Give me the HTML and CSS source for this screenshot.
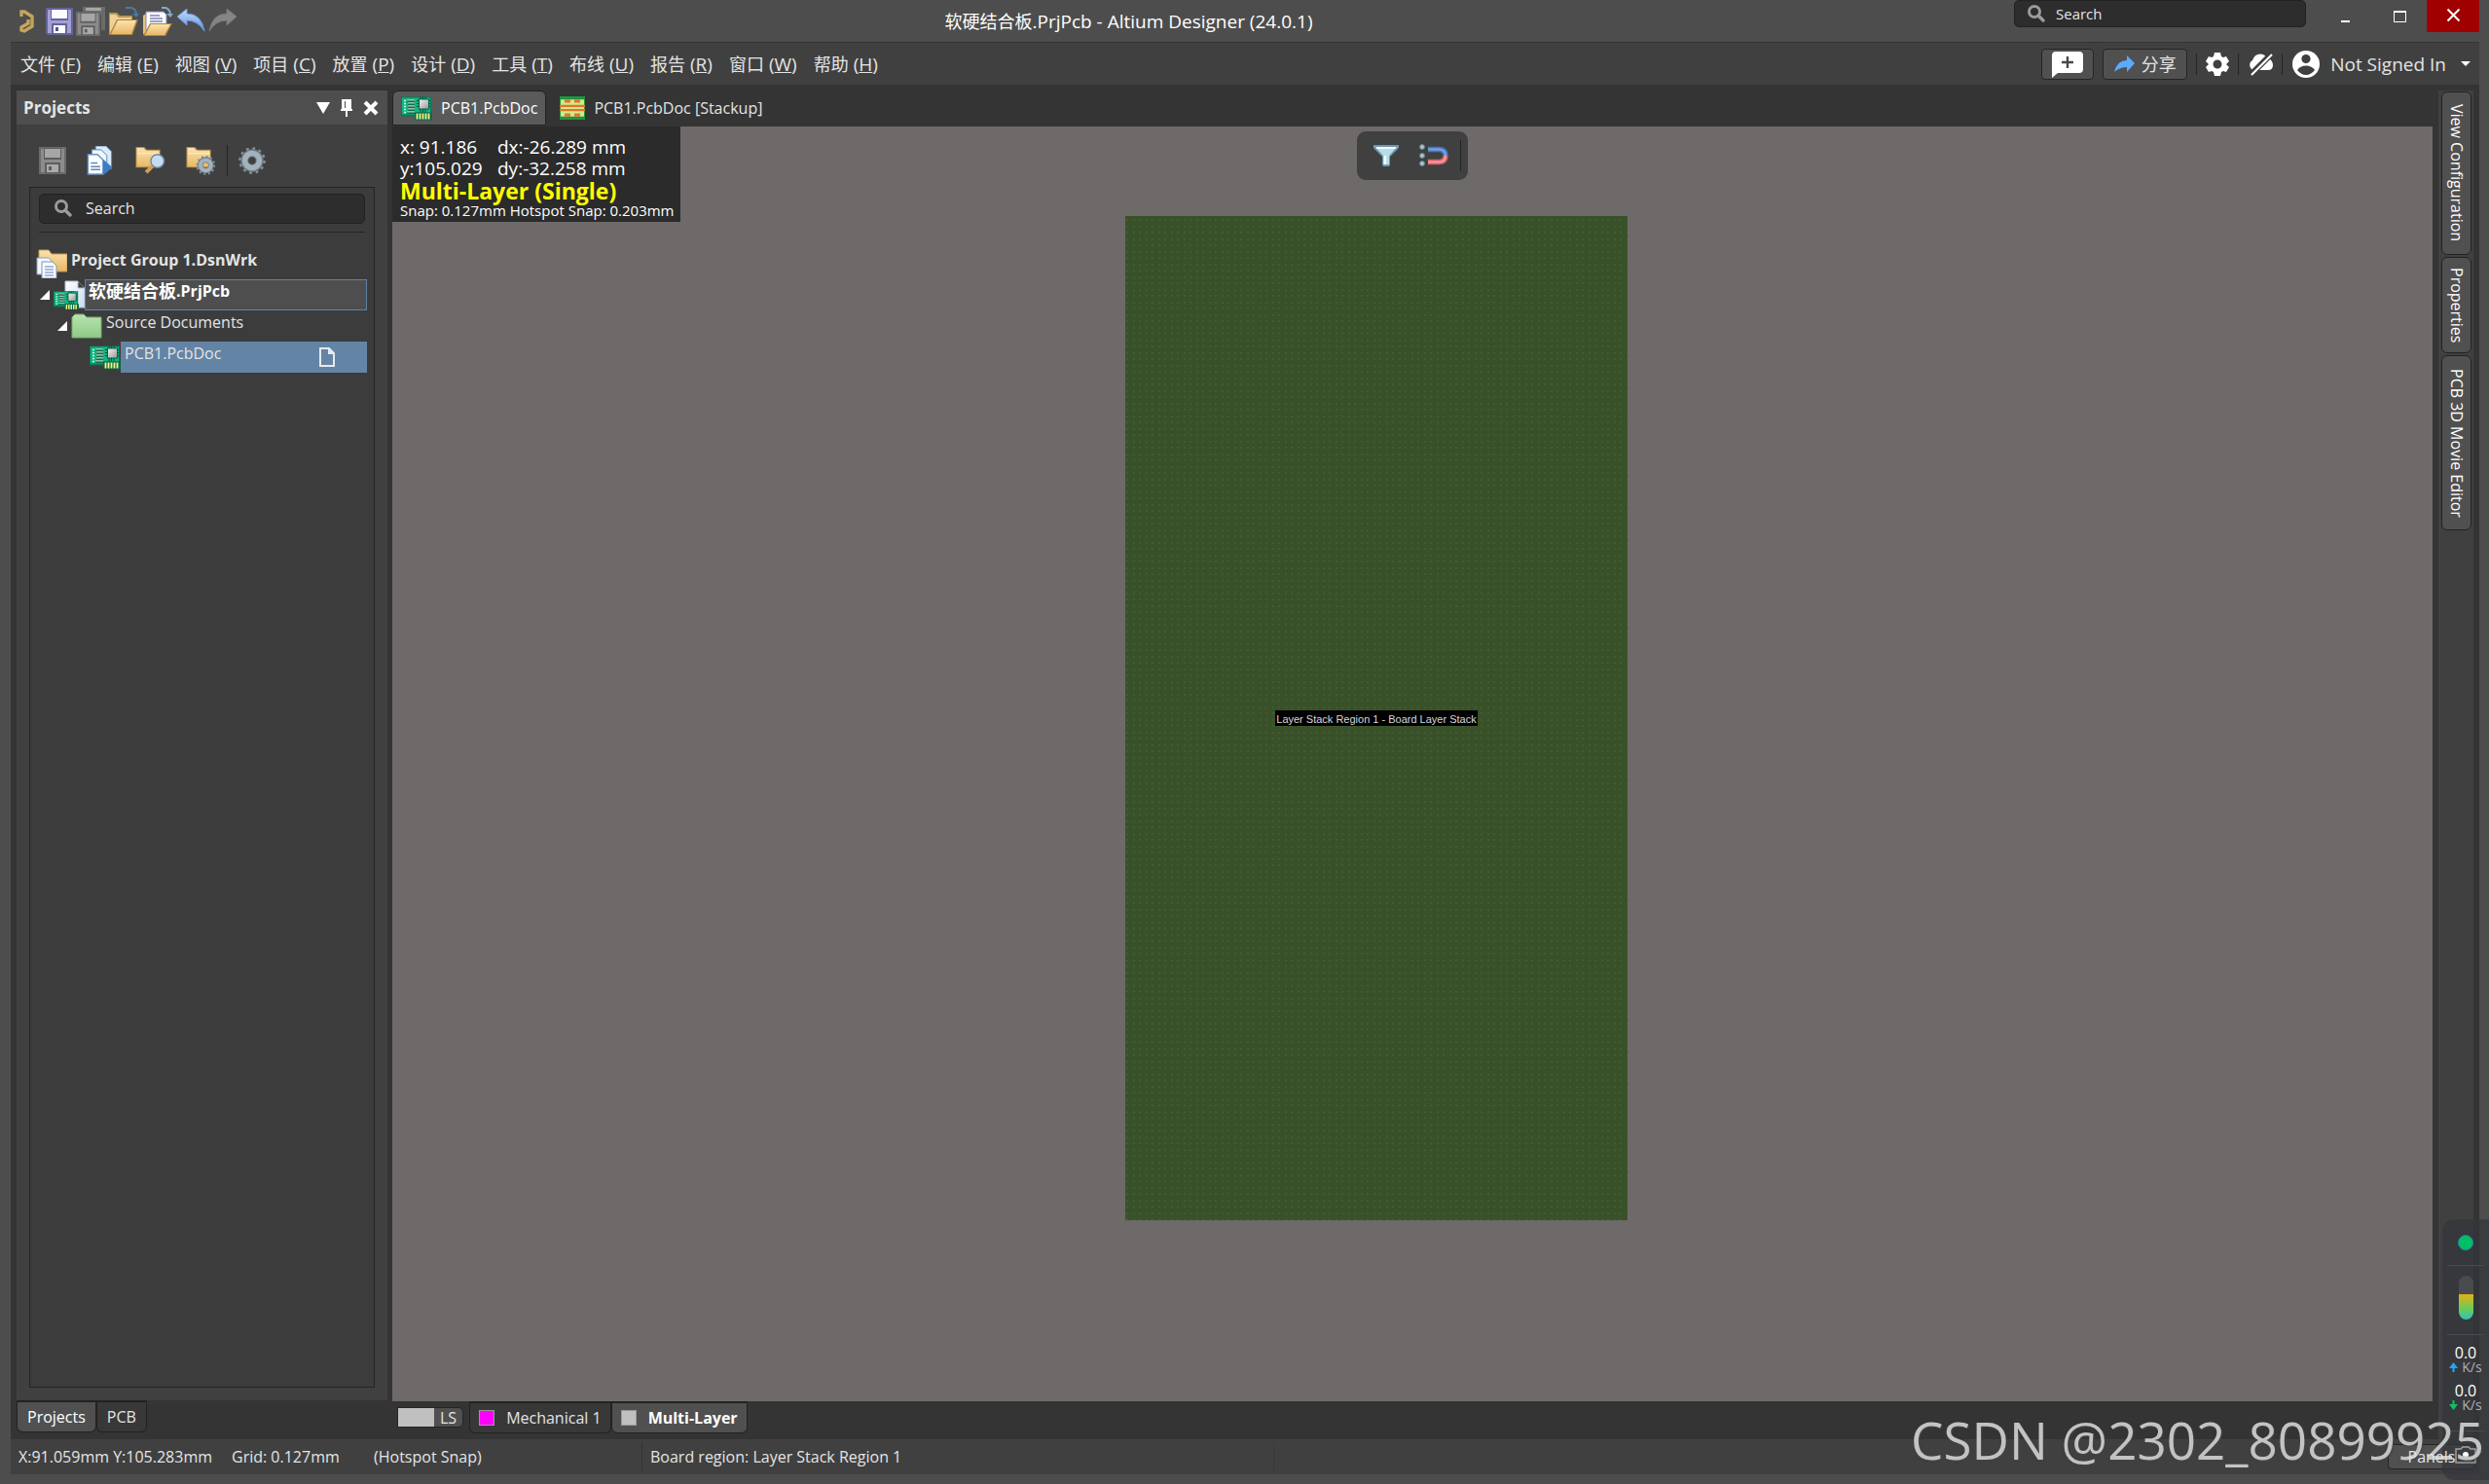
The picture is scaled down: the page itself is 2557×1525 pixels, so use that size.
FILE: index.html
```html
<!DOCTYPE html>
<html lang="zh-CN">
<head>
<meta charset="utf-8">
<title>软硬结合板.PrjPcb - Altium Designer (24.0.1)</title>
<link rel="stylesheet" href="styles.css">
</head>
<body>
<svg class="defs" aria-hidden="true">
  <defs>
    <linearGradient id="gold" x1="0" y1="0" x2="0" y2="1"><stop offset="0" stop-color="#fbe3ad"/><stop offset="1" stop-color="#e9b766"/></linearGradient>
    <linearGradient id="blue" x1="0" y1="0" x2="0" y2="1"><stop offset="0" stop-color="#c4dcfa"/><stop offset="1" stop-color="#5f8fdc"/></linearGradient>
    <linearGradient id="leaf" x1="0" y1="0" x2="0" y2="1"><stop offset="0" stop-color="#b9e3b0"/><stop offset="1" stop-color="#8fca85"/></linearGradient>
    <linearGradient id="paper" x1="0" y1="0" x2="1" y2="1"><stop offset="0" stop-color="#fff"/><stop offset="1" stop-color="#c9dcf0"/></linearGradient>
    <linearGradient id="chipface" x1="0" y1="0" x2="1" y2="1"><stop offset="0" stop-color="#f0f0f0"/><stop offset="1" stop-color="#9c9c9c"/></linearGradient>
    <symbol id="search" viewBox="0 0 18 18"><circle cx="7" cy="7" r="5.5" fill="none" stroke="#9b9b9b" stroke-width="3"/><path d="M11 11l5 5" stroke="#9b9b9b" stroke-width="3.4" stroke-linecap="round"/></symbol>
    <symbol id="floppy" viewBox="0 0 28 28"><path d="M0 0H28V28H2L0 26Z" fill="#646496"/><path d="M2 2H26V26H2Z" fill="#a3a0d8"/><path d="M5 1H23V13H5Z" fill="#646496"/><path d="M6 2H22V11H6Z" fill="#fbfbfe"/><path d="M6 16H22V27H6Z" fill="#646496"/><path d="M8 18H20V26H8Z" fill="#fff"/><path d="M10 20H13V24H10Z" fill="#55558a"/></symbol>
    <symbol id="floppy-off" viewBox="0 0 28 28"><path d="M0 0H28V28H0Z" fill="#6b6b6b"/><path d="M2 2H26V26H2Z" fill="#8c8c8c"/><path d="M5 1H23V13H5Z" fill="#5d5d5d"/><path d="M6 2H22V11H6Z" fill="#a6a6a6"/><path d="M6 16H22V27H6Z" fill="#5d5d5d"/><path d="M8 18H20V26H8Z" fill="#aaa"/><path d="M10 20H13V24H10Z" fill="#5d5d5d"/></symbol>
    <symbol id="board" viewBox="0 0 32 25"><path d="M0 1H31V17H28V21H0Z" fill="#067a55"/><path d="M1 2H30V17H14V19H1Z" fill="#10b583"/><path d="M3 5h2M3 8h2M3 11h2M3 14h2M3 17h2" stroke="#d9f5e8" stroke-width="1.6"/><path d="M6 5H14M7 8H14M7 11H14M7 14H14M6 17H14" stroke="#075c3e" stroke-width="2.4"/><path d="M6 4.400H14M7 7.400H14M7 10.400H14M7 13.400H14M6 16.400H14" stroke="#e2f7e9" stroke-width="1"/><path d="M20 1V17M22.500 1V17M25 1V17M16 5H30M16 8H30M16 11H30" stroke="#044c35" stroke-width="1"/><path d="M18 3H29V14H18Z" fill="#075f43"/><path d="M19 4H28V13H19Z" fill="url(#chipface)"/><path d="M14 17H32V25H14Z" fill="#076b48"/><path d="M16.500 18V24M19.500 18V24M22.500 18V24M25.500 18V24M28.500 18V24" stroke="#f5f58a" stroke-width="1.800"/></symbol>
    <symbol id="cog" viewBox="0 0 28 28"><circle cx="14" cy="14" r="12.300" fill="none" stroke="#84939c" stroke-width="3" stroke-dasharray="2.700 3.740"/><circle cx="14" cy="14" r="7.700" fill="none" stroke="#6b7b86" stroke-width="8"/><circle cx="14" cy="14" r="7.500" fill="none" stroke="#a4b2bc" stroke-width="5.500"/></symbol>
    <symbol id="folder" viewBox="0 0 30 26"><path d="M1 23V1H10L13 4H27V23Z" fill="#b08c4d"/><path d="M2 22V2H9L12 5H26V22Z" fill="url(#gold)"/><path d="M3 8H26" stroke="#fff0c8"/></symbol>
    <symbol id="twisty" viewBox="0 0 10 10"><path d="M10 0V10H0Z" fill="#fff"/></symbol>
  </defs>
</svg>

<header class="titlebar">
  <div class="quick">
    <svg class="logo" viewBox="0 0 17 26"><path d="M3 8V3H6L14 8V18L6 23L3 22V19L10 15V11" fill="none" stroke="#c6a45b" stroke-width="3.400"/></svg>
    <button class="tool" aria-label="Save"><svg class="i28"><use href="#floppy"/></svg></button>
    <button class="tool" aria-label="Save all"><svg class="i30" viewBox="0 0 30 30"><path d="M7 0H30V24H26V8H7Z" fill="#6b6b6b"/><path d="M10 1H26V4H10Z" fill="#a6a6a6"/><use href="#floppy-off" x="0" y="5" width="25" height="25"/></svg></button>
    <button class="tool" aria-label="Open"><svg class="i32" viewBox="0 0 32 30"><path d="M1 28V6H9L12 9H25V28Z" fill="#b89656"/><path d="M2 27V8H8L11 11H24V27Z" fill="#f0d194"/><path d="M1 29L9 13H31L25 29Z" fill="#a88345"/><path d="M3 28L10 14H29L24 28Z" fill="url(#gold)"/><path d="M18 1H23Q28 1 29 7" fill="none" stroke="#477ba5" stroke-width="2"/><path d="M25 7H32L29 11Z" fill="#477ba5"/></svg></button>
    <button class="tool" aria-label="Open project"><svg class="i32" viewBox="0 0 32 30"><path d="M1 28V9L4 7V28Z" fill="#e8c079"/><path d="M4 5H22L25 8V24H4Z" fill="#fdfdff" stroke="#8187b5"/><path d="M8 9H18M8 12H21M8 15H21" stroke="#7d82ae" stroke-width="1.500"/><path d="M1 30L8 17H31L24 30Z" fill="#b08342"/><path d="M3 29L9 18H29L23 29Z" fill="url(#gold)"/><path d="M20 1H24Q28 2 29 7" fill="none" stroke="#7fa9c9" stroke-width="2"/><path d="M25 7H32L29 11Z" fill="#7fa9c9"/></svg></button>
    <button class="tool" aria-label="Undo"><svg class="i30" viewBox="0 0 30 30"><path d="M1 10L11 2V7Q26 7 29 25Q22 14 11 14V19Z" fill="url(#blue)" stroke="#6d97de"/></svg></button>
    <button class="tool" aria-label="Redo"><svg class="i30" viewBox="0 0 30 30"><path d="M29 10L19 2V7Q4 7 1 25Q8 14 19 14V19Z" fill="#858585" stroke="#767676"/></svg></button>
  </div>
  <h1 class="title"><span class="han">软硬结合板</span>.PrjPcb - Altium Designer (24.0.1)</h1>
  <div class="window-side">
    <label class="field global-search"><svg class="i18"><use href="#search"/></svg><input type="text" placeholder="Search" aria-label="Search"></label>
    <button class="win" aria-label="Minimize"><svg viewBox="0 0 54 33"><path d="M20 22H29" stroke="#fff" stroke-width="2"/></svg></button>
    <button class="win" aria-label="Maximize"><svg viewBox="0 0 54 33"><path d="M20.500 12H32.500V22.500H20.500Z" fill="none" stroke="#fff"/><path d="M20 12H33" stroke="#fff" stroke-width="2"/></svg></button>
    <button class="win close" aria-label="Close"><svg viewBox="0 0 54 33"><path d="M21.500 9.500L33.500 21.500M33.500 9.500L21.500 21.500" stroke="#fff" stroke-width="2"/></svg></button>
  </div>
</header>

<div class="frame">
  <nav class="menubar">
    <div class="menus">
      <button class="menu">文件 <span>(<u>F</u>)</span></button>
      <button class="menu">编辑 <span>(<u>E</u>)</span></button>
      <button class="menu">视图 <span>(<u>V</u>)</span></button>
      <button class="menu">项目 <span>(<u>C</u>)</span></button>
      <button class="menu">放置 <span>(<u>P</u>)</span></button>
      <button class="menu">设计 <span>(<u>D</u>)</span></button>
      <button class="menu">工具 <span>(<u>T</u>)</span></button>
      <button class="menu">布线 <span>(<u>U</u>)</span></button>
      <button class="menu">报告 <span>(<u>R</u>)</span></button>
      <button class="menu">窗口 <span>(<u>W</u>)</span></button>
      <button class="menu">帮助 <span>(<u>H</u>)</span></button>
    </div>
    <div class="account">
      <button class="boxed note" aria-label="Comment"><svg class="i32" viewBox="0 0 32 28"><path d="M4 1H28Q32 1 32 5V19Q32 23 28 23H6L0 28V5Q0 1 4 1Z" fill="#fff"/><path d="M16 6V18M10 12H22" stroke="#4a4a4a" stroke-width="2.400"/></svg></button>
      <button class="boxed share"><svg class="i22" viewBox="0 0 22 18"><path d="M21 8L13 0V5Q3 5 0 17Q6 12 13 12V17Z" fill="#5aabff"/></svg><span class="han">分享</span></button>
      <button class="icon-btn" aria-label="Settings"><svg class="i24" viewBox="0 0 24 24"><path fill="#fff" fill-rule="evenodd" d="M9 0H15L16 4L18 5L21 4L24 9L21 12L24 15L21 20L18 19L16 20L15 24H9L8 20L6 19L3 20L0 15L3 12L0 9L3 4L6 5L8 4ZM12 7.500A4.500 4.500 0 1 0 12 16.500A4.500 4.500 0 1 0 12 7.500Z"/></svg></button>
      <button class="icon-btn" aria-label="Cloud offline"><svg class="i26" viewBox="0 0 26 24"><path d="M6 18A5.500 5.500 0 0 1 5 8Q8 0 16 2L22 6Q26 9 26 13Q26 18 21 18Z" fill="#fff"/><path d="M4 22L24 2" stroke="#3f3f3f" stroke-width="6"/><path d="M4 23L25 2" stroke="#fff" stroke-width="2.200"/></svg></button>
      <button class="icon-btn user"><svg class="i28" viewBox="0 0 28 28"><circle cx="14" cy="14" r="14" fill="#fff"/><circle cx="14" cy="8.500" r="4.600" fill="#3f3f3f"/><path d="M5 20Q8 15.500 14 15.500Q20 15.500 23 20Q19 25 14 25Q9 25 5 20Z" fill="#3f3f3f"/></svg><span>Not Signed In</span><svg class="caret" viewBox="0 0 10 5"><path d="M0 0H10L5 5Z" fill="#fff"/></svg></button>
    </div>
  </nav>

  <main class="workspace">
    <aside class="side">
      <section class="panel">
        <header class="panel-head">
          <h2>Projects</h2>
          <button class="glyph" aria-label="Menu"><svg class="i14" viewBox="0 0 14 12"><path d="M0 0H14L7 12Z" fill="#fff"/></svg></button>
          <button class="glyph" aria-label="Pin"><svg class="i12" viewBox="0 0 12 18"><path d="M1 0H11V10H12V12H7V18H5V12H0V10H1ZM4 2V9H5V2Z" fill="#fff" fill-rule="evenodd"/></svg></button>
          <button class="glyph" aria-label="Close panel"><svg class="i16" viewBox="0 0 16 16"><path d="M2 2L14 14M14 2L2 14" stroke="#fff" stroke-width="4"/></svg></button>
        </header>
        <div class="panel-tools">
          <button class="tool" aria-label="Save"><svg class="i28"><use href="#floppy-off"/></svg></button>
          <button class="tool" aria-label="Compile"><svg class="i30" viewBox="0 0 28 31"><path d="M9 0H20L26 6V24H9Z" fill="#dbeafa" stroke="#5d86b5"/><path d="M5 4H15L21 10V27H5Z" fill="#eef6ff" stroke="#5d86b5"/><path d="M1 9H11L17 15V30H1Z" fill="#fff" stroke="#6d93bf" stroke-width="1.500"/><path d="M4 18H11M4 22H14M4 25H14" stroke="#5d86b5" stroke-width="1.500"/><path d="M17 14L27 23L17 31Z" fill="#3e7cc9"/></svg></button>
          <button class="tool" aria-label="Explore"><svg class="i32" viewBox="0 0 32 31"><use href="#folder" width="30" height="26"/><path d="M19 21L12 28" stroke="#cf9f50" stroke-width="4"/><circle cx="24" cy="16" r="7" fill="#c8dcf1" stroke="#708ca6" stroke-width="1.500"/></svg></button>
          <button class="tool" aria-label="Project options"><svg class="i32" viewBox="0 0 32 31"><use href="#folder" width="30" height="26"/><use href="#cog" x="11" y="10" width="21" height="21"/></svg></button>
          <span class="rule"></span>
          <button class="tool" aria-label="Settings"><svg class="i28"><use href="#cog"/></svg></button>
        </div>
        <div class="panel-body">
          <label class="field"><svg class="i18"><use href="#search"/></svg><input type="text" placeholder="Search" aria-label="Search projects"></label>
          <ul class="tree">
            <li class="node level0"><svg class="i32" viewBox="0 0 32 30"><path d="M3 20V1H13L16 5H32V23H3Z" fill="url(#gold)" stroke="#c29b5c"/><path d="M1 9H13L16 12V26H1Z" fill="#f3f8ff" stroke="#8aa0c4"/><path d="M6 13H17L21 17V30H6Z" fill="#f8fbff" stroke="#7d93bb"/><path d="M9 18H18M9 21H18M9 24H18M9 27H18" stroke="#5d80b5"/></svg><span class="name strong">Project Group 1.DsnWrk</span></li>
            <li class="node level1"><svg class="twisty"><use href="#twisty"/></svg><svg class="i32" viewBox="0 0 32 30"><path d="M12 1H25L32 8V28H12Z" fill="url(#paper)" stroke="#b9bfd2"/><path d="M25 1V8H32" fill="#3c3c3c" stroke="#b9bfd2"/><use href="#board" x="0" y="10" width="26" height="21"/></svg><span class="name strong current"><span class="han">软硬结合板</span>.PrjPcb</span></li>
            <li class="node level2"><svg class="twisty"><use href="#twisty"/></svg><svg class="i32" viewBox="0 0 32 30"><path d="M1 27V6L4 3H13L16 6H31V27Z" fill="url(#leaf)" stroke="#79ab70"/></svg><span class="name">Source Documents</span></li>
            <li class="node level3"><svg class="i32"><use href="#board"/></svg><span class="name selected">PCB1.PcbDoc<svg class="doc" viewBox="0 0 16 20"><path d="M1 1H10L15 6V19H1Z" fill="none" stroke="#e6eaf0" stroke-width="2"/><path d="M9 0V7H16Z" fill="#e6eaf0"/></svg></span></li>
          </ul>
        </div>
      </section>
      <div class="side-tabs">
        <button class="btab on">Projects</button>
        <button class="btab">PCB</button>
      </div>
    </aside>

    <section class="editor">
      <div class="doc-tabs">
        <button class="dtab on"><svg class="i32"><use href="#board"/></svg>PCB1.PcbDoc</button>
        <button class="dtab"><svg class="i26" viewBox="0 0 26 22" preserveAspectRatio="none"><path d="M0 0H26V22H0Z" fill="#20943f"/><path d="M1 3H25V19H1Z" fill="#d3e88c"/><path d="M5 3h6v3H5zM15 3h6v3h-6zM5 16h6v3H5zM15 16h6v3h-6zM0 8h26v2H0zM0 12h26v2H0z" fill="#e0762a"/></svg>PCB1.PcbDoc [Stackup]</button>
      </div>
      <div class="canvas">
        <div class="pcb"><span class="region">Layer Stack Region 1 - Board Layer Stack</span></div>
        <div class="hud">
          <div class="coords"><span>x: 91.186</span><span>dx:-26.289 mm</span><span>y:105.029</span><span>dy:-32.258 mm</span></div>
          <strong>Multi-Layer (Single)</strong>
          <small>Snap: 0.127mm Hotspot Snap: 0.203mm</small>
        </div>
        <div class="active-bar">
          <button class="tool" aria-label="Filter"><svg class="i26" viewBox="0 0 26 22"><path d="M0 0H26V3L17 12V20Q17 22 15 22H11Q9 22 9 20V12L0 3Z" fill="#6f98b5"/><path d="M2 2H24L16 11V20H10V11Z" fill="#b9dde5"/><path d="M3 2H23V4H3ZM11 11H13V20H11Z" fill="#f4fbfc"/></svg></button>
          <button class="tool" aria-label="Snapping"><svg class="i30" viewBox="0 0 30 24"><g fill="#a9c6cc" stroke="#658088"><circle cx="3" cy="3" r="2.500"/><circle cx="3" cy="12" r="2.500"/><circle cx="3" cy="20" r="2.500"/></g><path d="M9 5.500H20Q27 5.500 27 12" fill="none" stroke="#4478c4" stroke-width="5.500"/><path d="M9 18.500H20Q27 18.500 27 12" fill="none" stroke="#d8616a" stroke-width="5.500"/><path d="M9 5.500H20Q27 5.500 27 12" fill="none" stroke="#7fa3e6" stroke-width="2"/><path d="M9 18.500H20Q27 18.500 27 12" fill="none" stroke="#f3a0a4" stroke-width="2"/></svg></button>
          <span class="rule"></span>
        </div>
      </div>
      <div class="layer-tabs">
        <button class="layer-set"><span class="patch"></span>LS</button>
        <button class="btab"><span class="swatch magenta"></span>Mechanical 1</button>
        <button class="btab on strong"><span class="swatch"></span>Multi-Layer</button>
      </div>
    </section>

    <nav class="dock">
      <div class="dock-strip">
        <button class="vtab">View Configuration</button>
        <button class="vtab">Properties</button>
        <button class="vtab">PCB 3D Movie Editor</button>
      </div>
    </nav>
  </main>

  <footer class="status">
    <span class="where">X:91.059mm Y:105.283mm</span><span class="grid">Grid: 0.127mm</span><span class="snap">(Hotspot Snap)</span>
    <span class="hint">Board region: Layer Stack Region 1</span>
    <span class="spare"></span>
    <button class="boxed panels"><span>Panels</span></button>
  </footer>
</div>

<aside class="monitor">
  <span class="dot"></span>
  <hr>
  <span class="gauge"></span>
  <hr>
  <div class="rate"><b>0.0</b><span><svg viewBox="0 0 9 10"><path d="M4.500 0L9 6H5.500V10H3.500V6H0Z" fill="#1ba8ff"/></svg>K/s</span></div>
  <div class="rate"><b>0.0</b><span><svg viewBox="0 0 9 10"><path d="M4.500 10L9 4H5.500V0H3.500V4H0Z" fill="#0cc268"/></svg>K/s</span></div>
  <hr>
  <svg class="camera" viewBox="0 0 22 18"><path d="M1 3H6L8 1H14L16 3H21V17H1Z" fill="none" stroke="#a0a1a4" stroke-width="1.500"/><circle cx="11" cy="9" r="3" fill="#fff"/></svg>
</aside>
<div class="watermark">CSDN @2302_80899925</div>
</body>
</html>
```
FILE: styles.css
```css
* { box-sizing: border-box; }
body {
  margin: 0;
  min-height: 100vh;
  display: flex;
  flex-direction: column;
  position: relative;
  overflow: hidden;
  background: #4d4d4d;
  color: #e4e4e4;
  font: 16px/20px "Open Sans", "Noto Sans CJK SC", sans-serif;
}
button, input { font: inherit; color: inherit; background: none; border: 0; padding: 0; margin: 0; }
button { display: flex; align-items: center; white-space: nowrap; }
h1, h2, ul { margin: 0; padding: 0; font-size: inherit; list-style: none; }
svg { display: block; flex: none; }
.defs { position: absolute; width: 0; height: 0; }
.i12 { width: 12px; height: 18px; }
.i14 { width: 14px; height: 12px; }
.i16 { width: 16px; height: 16px; }
.i18 { width: 18px; height: 18px; }
.i22 { width: 22px; height: 18px; }
.i24 { width: 24px; height: 24px; }
.i26 { width: 26px; height: 24px; }
.i28 { width: 28px; height: 28px; }
.i30 { width: 30px; height: 30px; }
.i32 { width: 32px; height: 30px; }
.han { font-size: 18px; }
.strong { font-weight: 700; }
.rule { width: 1px; background: #242424; }

/* Title bar */
.titlebar { display: grid; grid-template-columns: 1fr auto 1fr; height: 43px; padding-right: 10px; }
.quick { display: flex; align-items: center; gap: 3px; padding-left: 19px; }
.logo { width: 17px; height: 26px; margin-right: 8px; }
.title { align-self: center; font-size: 19px; font-weight: 400; color: #fff; padding-right: 228px; }
.window-side { display: flex; justify-content: flex-end; align-items: flex-start; }
.win svg { width: 54px; height: 33px; }
.close { background: #a00000; }
.field {
  display: flex; align-items: center; gap: 14px;
  height: 31px; padding: 0 15px 2px;
  background: #2d2d2d; border: 1px solid #222; border-radius: 5px;
}
.field input { flex: 1; min-width: 0; outline: 0; }
.field input::placeholder { color: #e4e4e4; opacity: 1; }
.global-search { width: 300px; height: 28px; gap: 11px; margin-right: 16px; padding: 0 13px; font-size: 15px; }

/* Menu bar */
.frame { flex: 1; display: flex; flex-direction: column; margin: 0 10px 10px 11px; }
.menubar {
  display: flex; justify-content: space-between; align-items: center;
  height: 44px; background: #404040; border-top: 1px solid #333;
}
.menus { display: flex; gap: 17px; padding-left: 10px; }
.menu { font-size: 18px; gap: 5px; }
.menu span { font-size: 19px; }
.account { display: flex; align-items: center; height: 32px; gap: 9px; }
.boxed { justify-content: center; background: #505050; border: 1px solid #252525; border-radius: 4px; }
.note { width: 54px; height: 32px; }
.share { width: 87px; height: 32px; gap: 6px; }
.icon-btn { height: 22px; padding-left: 9px; border-left: 1px solid #242424; }
.user { font-size: 19px; gap: 11px; padding: 0 9px 0 10px; }
.caret { width: 10px; height: 5px; margin-left: 4px; }

/* Work area */
.workspace { flex: 1; display: flex; background: #343434; padding: 6px 6px 0; }
.side { display: flex; flex-direction: column; width: 381px; margin-right: 5px; }
.panel { flex: 1; display: flex; flex-direction: column; background: #404040; }
.panel-head { display: flex; align-items: center; gap: 11px; height: 35px; padding: 0 9px 0 7px; background: #4e4e4e; }
.panel-head h2 { flex: 1; font-size: 17px; }
.panel-tools { display: flex; align-items: center; gap: 20px; height: 64px; margin: 5px 0 -5px; padding-left: 23px; }
.panel-tools .rule { height: 32px; margin: 0 -9px; }
.panel-body { flex: 1; margin: 0 13px 13px; padding: 6px 9px; border: 1px solid #242424; background: #3c3c3c; }
.tree { border-top: 1px solid #242424; margin-top: 8px; padding-top: 16px; }
.node { display: flex; align-items: center; height: 32px; }
.level0 { margin-left: -3px; }
.level2 { padding-left: 18px; }
.level3 { padding-left: 52px; }
.twisty { width: 10px; height: 10px; margin: 0 4px 0 1px; }
.name { flex: 1; display: flex; align-items: center; height: 32px; padding: 0 4px 9px; margin-right: -2px; }
.current { background: #4e4e4e; border: 1px solid #5c83aa; color: #fff; padding-left: 3px; }
.selected { background: #6384a5; justify-content: space-between; }
.doc { width: 16px; height: 20px; margin: 9px 29px 0 0; }
.side-tabs, .layer-tabs { display: flex; height: 40px; align-items: flex-start; }
.layer-tabs { height: 39px; }
.btab {
  height: 33px; padding: 0 10px 1px;
  background: #383838; border: 1px solid #222; border-top-width: 2px; border-radius: 0 0 6px 6px;
}
.on { background: #505050; color: #fff; }
.layer-tabs .btab { gap: 12px; padding: 0 9px 1px; }
.layer-set { height: 21px; margin: 6px 6px 0 5px; padding-right: 6px; gap: 6px; background: #505050; border: 1px solid #252525; border-radius: 0 5px 5px 0; }
.patch { width: 37px; height: 19px; background: #c0c0c0; }
.swatch { width: 16px; height: 16px; background: #c0c0c0; border: 1px solid #999; }
.magenta { background: #f0f; }

/* Editor */
.editor { flex: 1; min-width: 0; display: flex; flex-direction: column; }
.doc-tabs { display: flex; height: 37px; }
.dtab { height: 36px; gap: 9px; padding: 0 8px; border-radius: 6px 6px 0 0; }
.dtab .i32 { height: 26px; }
.dtab.on { background: #5a5a5a; border: 1px solid #222; margin-right: 6px; }
.canvas { flex: 1; position: relative; background: #6e6a69; }
.pcb {
  position: absolute; left: 753px; top: 92px; width: 516px; height: 1032px;
  display: flex; align-items: center; justify-content: center;
  background-color: #395129;
  background-image: radial-gradient(circle at 2px 4px, #435b32 1px, transparent 1px),
    radial-gradient(circle at 9px 4px, #435b32 1px, transparent 1px),
    radial-gradient(circle at 2px 11px, #435b32 1px, transparent 1px),
    radial-gradient(circle at 9px 11px, #435b32 1px, transparent 1px);
  background-size: 13px 13px;
}
.region { background: #000; color: #d8d8d8; font: 11px/14px "Liberation Sans", sans-serif; padding: 2px 1px 0; }
.hud { position: absolute; left: 0; top: 0; width: 296px; height: 98px; padding: 10px 0 0 8px; background: #2b2b2b; color: #fff; white-space: nowrap; }
.coords { display: grid; grid-template-columns: 100px auto; font-size: 19px; line-height: 22px; }
.hud strong { display: block; font-size: 23px; line-height: 24px; color: #ff0; }
.hud small { display: block; font-size: 15px; line-height: 16px; }
.active-bar { position: absolute; left: 991px; top: 5px; width: 114px; height: 50px; display: flex; align-items: center; gap: 21px; padding-left: 17px; border-radius: 9px; background: #404040; }
.active-bar .i26 { height: 22px; }
.active-bar .i30 { height: 24px; }
.active-bar .rule { height: 32px; margin-left: -9px; }

/* Right dock */
.dock { margin-left: 6px; }
.dock-strip { display: flex; flex-direction: column; gap: 2px; width: 36px; height: 100%; padding: 1px 3px; background: #404040; }
.vtab { writing-mode: vertical-rl; width: 31px; height: 168px; justify-content: center; background: #505050; border: 1px solid #222; border-radius: 6px; color: #fff; padding: 0; }
.vtab:nth-child(2) { height: 99px; }
.vtab:nth-child(3) { height: 180px; }

/* Status bar */
.status { display: flex; align-items: center; height: 36px; padding-left: 8px; background: #404040; white-space: nowrap; }
.where { width: 219px; }
.grid { width: 146px; }
.snap { width: 275px; }
.hint { width: 649px; height: 30px; line-height: 30px; padding-left: 8px; border-left: 1px solid #333; }
.spare { flex: 1; height: 30px; border-left: 1px solid #383838; }
.panels { width: 90px; height: 26px; margin: 0 4px 0 0; }
.panels span { position: relative; z-index: 1; }

/* Floating network monitor */
.monitor {
  position: absolute; right: 0; bottom: 4px; width: 48px; height: 268px;
  display: flex; flex-direction: column; align-items: center;
  padding-top: 16px; border-radius: 12px 0 0 12px; background: rgba(50, 52, 58, .7);
}
.monitor hr { width: 38px; height: 1px; margin: 15px 0 10px; border: 0; background: #4b4c50; }
.dot { width: 16px; height: 16px; border-radius: 8px; background: #00c063; border: 1px solid #2a7fb5; }
.gauge { width: 15px; height: 45px; border-radius: 8px; background: linear-gradient(#4a4b4f 19px, #e2b214 19px, #6bcb58 34px, #33c1bb); }
.rate { display: flex; flex-direction: column; align-items: center; height: 39px; font-size: 14px; line-height: 14px; color: #b0b0b0; }
.rate b { font-size: 16px; font-weight: 400; line-height: 16px; color: #fff; }
.rate span { display: flex; align-items: center; gap: 4px; }
.rate svg { width: 9px; height: 10px; }
.monitor .rate + hr { margin: 10px 0 15px; }
.camera { width: 22px; height: 18px; }
.watermark {
  position: absolute; right: 5px; bottom: 9px;
  font: 53px/72px "Open Sans", sans-serif; color: #c3c3c3;
  text-shadow: 1px 1px 2px #444; white-space: nowrap; pointer-events: none;
}
```
